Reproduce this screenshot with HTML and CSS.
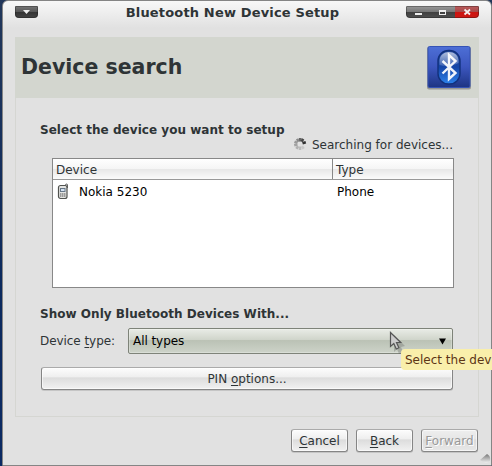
FILE: index.html
```html
<!DOCTYPE html>
<html lang="en">
<head>
<meta charset="utf-8">
<title>Bluetooth New Device Setup</title>
<link rel="stylesheet" href="styles.css">
</head>
<body>
<div class="window">
  <header class="titlebar">
    <div class="menu-btn"><svg width="23" height="12" viewBox="0 0 23 12"><path d="M8 4h7l-3.500 4z" fill="#eee"/></svg></div>
    <h1 class="title">Bluetooth New Device Setup</h1>
    <div class="controls">
      <svg width="73" height="12" viewBox="0 0 73 12"><path d="M9 7h7v2H9z" fill="#eee"/><path d="M33 4h7v5h-7zM34 6v2h5V6z" fill="#eee" fill-rule="evenodd"/><path d="M58.500 3.500l5.500 5M64 3.500l-5.500 5" stroke="#f5eeee" stroke-width="1.800"/></svg>
    </div>
  </header>
  <main class="page">
    <div class="banner">
      <h2>Device search</h2>
      <svg class="bt" width="46" height="46" viewBox="0 0 46 46">
        <defs>
          <linearGradient id="sq" x2="0" y2="1"><stop stop-color="#4d6fd6"/><stop offset=".5" stop-color="#3c56be"/><stop offset="1" stop-color="#1d3483"/></linearGradient>
          <linearGradient id="ov" x2="0" y2="1"><stop stop-color="#254a9e"/><stop offset=".5" stop-color="#1546a8"/><stop offset="1" stop-color="#2c82ec"/></linearGradient>
          <linearGradient id="gl" x2="0" y2="1"><stop stop-color="#fff" stop-opacity=".8"/><stop offset="1" stop-color="#fff" stop-opacity=".2"/></linearGradient>
        </defs>
        <rect x="1" y="2" width="44" height="42.500" rx="2" fill="#777" opacity=".65"/>
        <rect x="2" y="1.500" width="42" height="41" rx="1.500" fill="url(#sq)" stroke="#3553b5"/>
        <rect x="12" y="5.500" width="22" height="33.500" rx="10.500" fill="url(#ov)" stroke="#12317d" stroke-width="1.400"/>
        <path d="M13.500 20v-4c0-12 19-12 19 0v2c-6 3-13 4-19 2z" fill="url(#gl)" opacity=".8"/>
        <path d="M16.500 16l13 12-6.500 6V10l6.500 6-13 12.500" fill="none" stroke="#fff" stroke-width="2.400" opacity=".93"/>
      </svg>
    </div>
    <section class="content">
      <h3>Select the device you want to setup</h3>
      <div class="status">
        <svg width="14" height="14" viewBox="-7 -7 14 14" fill="none" stroke-width="2.600"><path d="M.3-6v3.500" stroke="#666"/><path d="M3.200-5.100L1.600-2.400" stroke="#484848"/><path d="M5.800-1.800L2.500-.8" stroke="#333"/><path d="M-2.800-5.300l1.300 3" stroke="#888"/><path d="M-5.500-2.300l3 1.200" stroke="#999"/><path d="M-5.800 1.300l3.300-.7" stroke="#a2a2a2"/><path d="M-3.600 4.700l1.700-2.500" stroke="#b0b0b0"/><path d="M0 6V2.500" stroke="#bbb"/><path d="M3.600 4.700L1.900 2.200" stroke="#c8c8c8"/></svg>
        <span>Searching for devices...</span>
      </div>
      <div class="list">
        <div class="list-head"><span class="c1">Device</span><span class="c2">Type</span></div>
        <div class="list-row">
          <span class="c1"><svg width="12" height="17" viewBox="0 0 12 17"><path d="M8.500 3.500V2q0-1 1-1t1 1v3" fill="#ddd" stroke="#666"/><rect x="1.500" y="2.500" width="8.500" height="13" rx="2" fill="#e4e4e2" stroke="#51534f" stroke-width="1.200"/><rect x="3.500" y="5.500" width="4.500" height="3" fill="#d4e1f1" stroke="#678"/><path d="M3 11h1.500M5 11h1.500M7 11h1.500M3 13h1.500M5 13h1.500M7 13h1.500" stroke="#555" stroke-width="1.100"/></svg><span>Nokia 5230</span></span>
          <span class="c2">Phone</span>
        </div>
      </div>
      <h3 class="filter">Show Only Bluetooth Devices With...</h3>
      <div class="type-row">
        <label>Device <u>t</u>ype:</label>
        <div class="combo"><span>All types</span><svg width="7" height="7" viewBox="0 0 7 7"><path d="M0 .5h7L3.500 6.500z"/></svg></div>
      </div>
      <button class="btn pin">PIN <u>o</u>ptions...</button>
    </section>
  </main>
  <footer class="actions">
    <button class="btn"><u>C</u>ancel</button>
    <button class="btn"><u>B</u>ack</button>
    <button class="btn off"><u>F</u>orward</button>
  </footer>
</div>
<svg class="grip" width="11" height="11" viewBox="0 0 11 11"><defs><linearGradient id="gr" x2="0" y2="1"><stop stop-color="#777"/><stop offset="1" stop-color="#eee"/></linearGradient></defs><path d="M0 7L7 1Q11 3 10 8Q6 12 0 7z" fill="url(#gr)"/></svg>
<svg class="cursor" width="20" height="24" viewBox="0 0 20 24"><path d="M5 4l11 11-4 1 2 5-4 2-2-5-3 3z" fill="#555" opacity=".3"/><path d="M1.500 1.500v14l3.300-3 2.500 5.500 2.600-1.200-2.400-5.300h4.200z" fill="#ccc" stroke="#555" stroke-width="1.200"/></svg>
<div class="tooltip">Select the dev</div>
</body>
</html>
```
FILE: styles.css
```css
* { box-sizing: border-box; }
body {
  margin: 0;
  width: 492px;
  height: 466px;
  overflow: hidden;
  position: relative;
  padding-left: 2px;
  background: linear-gradient(#22375a, #0c2a5e 60%, #0b2a63);
  font: 12px/16px "DejaVu Sans", sans-serif;
  color: #2e3436;
}
h1, h2, h3 { margin: 0; font-weight: bold; white-space: nowrap; }
u { text-decoration: underline; text-underline-offset: 2px; text-decoration-thickness: 1px; }
.window {
  width: 490px;
  height: 466px;
  border: 1px solid #858585;
  border-radius: 6px 6px 0 0;
  background: linear-gradient(#f8f8f8, #e1e1e1 27px);
  padding: 0 12px;
}
.titlebar {
  display: flex;
  justify-content: space-between;
  align-items: flex-start;
  height: 36px;
  padding-top: 5px;
}
.menu-btn, .controls {
  height: 12px;
  border-radius: 1px 1px 4px 4px;
  overflow: hidden;
  box-shadow: inset 0 0 0 1px rgba(20,20,20,.35);
}
.menu-btn { width: 23px; background: linear-gradient(#777, #555 50%, #333 50%, #444); }
.controls {
  width: 73px;
  background: linear-gradient(90deg, transparent 49px, rgba(240,0,0,.4) 49px), linear-gradient(90deg, transparent 49px, rgba(255,10,0,.6) 49px) 0 6px no-repeat, linear-gradient(#999, #777 50%, #404040 50%, #505050);
}
.menu-btn svg, .controls svg { display: block; }
.title { font-size: 13px; letter-spacing: .16px; line-height: 16px; margin-top: -1px; padding-left: 21px; }
.page { height: 380px; border: 1px solid #d5d6d2; }
.banner {
  display: flex;
  justify-content: space-between;
  height: 61px;
  margin: -1px -1px 0;
  padding: 8px 7px 0 6px;
  background: #d3d6cf;
}
.banner h2 { font-size: 20.5px; line-height: 24px; padding-top: 10px; }
.content { padding: 24px 25px 0 24px; }
.content h3 { font-size: 12px; line-height: 16px; letter-spacing: .03px; }
.status { display: flex; justify-content: flex-end; gap: 5px; height: 21px; margin-top: -1px; }
.list { height: 130px; margin: 0 -1px 0 12px; border: 1px solid #888; background: #fff; color: #000; }
.list-head {
  display: flex;
  height: 21px;
  border-bottom: 1px solid #999;
  background: linear-gradient(#fff, #f5f5f5 50%, #e7e7e7 50%, #fbfbfb);
  color: #2e3436;
  line-height: 22px;
}
.c1 { width: 280px; padding-left: 3px; }
.list-head .c1 { border-right: 1px solid #888; }
.c2 { padding-left: 4px; }
.list-head .c2 { padding-left: 3px; }
.list-row { display: flex; line-height: 24px; }
.list-row .c1 { display: flex; align-items: center; gap: 10px; padding-left: 4px; }
.list-row svg { margin-top: -2px; }
.content .filter { margin-top: 18px; }
.type-row { display: flex; justify-content: space-between; align-items: center; margin-top: 6px; height: 26px; }
.type-row label { letter-spacing: -.06px; }
.combo {
  display: flex;
  justify-content: space-between;
  align-items: center;
  width: 325px;
  height: 26px;
  padding: 0 6px 0 4px;
  border: 1px solid #7e8379;
  border-radius: 2px;
  background: linear-gradient(#e9ece6, #cfd4ca 46%, #bbc2b5 48%, #cdd3c9);
  box-shadow: inset 0 0 0 1px rgba(255,255,255,.25);
  color: #000;
}
.combo span { letter-spacing: -.06px; }
.btn {
  width: 57px;
  height: 23px;
  padding: 0;
  border: 1px solid #858585;
  border-top-color: #aaa;
  border-radius: 3px;
  background: linear-gradient(#fcfcfc, #eee 44%, #dcdcdc 46%, #f1f1f1);
  box-shadow: inset 0 0 0 1px rgba(255,255,255,.6), 0 1px rgba(0,0,0,.12);
  font: inherit;
  color: inherit;
}
.pin { display: block; width: 412px; margin: 13px 0 0 1px; }
.actions { display: flex; justify-content: flex-end; gap: 8px; padding: 12px 1px 0 0; }
.off { color: #999; text-shadow: 1px 1px #fff; background: linear-gradient(#eee, #e6e6e6 44%, #dadada 46%, #e8e8e8); }
.grip { position: absolute; left: 480px; top: 453px; }
.cursor { position: absolute; left: 389px; top: 331px; }
.tooltip {
  position: absolute;
  left: 401px;
  top: 349px;
  width: 91px;
  height: 21px;
  padding-left: 4px;
  border-radius: 4px 0 0 4px;
  background: #f9efab;
  color: #5c3516;
  line-height: 22px;
  white-space: nowrap;
  overflow: hidden;
}
```
